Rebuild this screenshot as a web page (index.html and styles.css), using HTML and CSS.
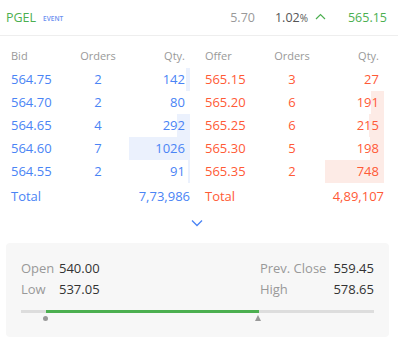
FILE: index.html
```html
<!DOCTYPE html>
<html lang="en">
<head>
    <meta charset="UTF-8">
    <meta name="viewport" content="width=device-width, initial-scale=1.0">
    <title>PGEL Market Depth</title>
    <link rel="stylesheet" href="styles.css">
</head>
<body>
    <div class="header">
        <span class="symbol">PGEL</span>
        <span class="tag">EVENT</span>
        <span class="change">5.70</span>
        <span class="pct">1.02<small>%</small></span>
        <svg class="up" width="11" height="7" viewBox="0 0 11 7"><path d="M1 6 L5.5 1.5 L10 6" fill="none" stroke="#4caf50" stroke-width="1.2"/></svg>
        <span class="ltp">565.15</span>
    </div>

    <div class="depth">
        <div class="side bids">
            <div class="row head"><span>Bid</span><span class="c">Orders</span><span class="r">Qty.</span></div>
            <div class="row"><span>564.75</span><span class="c">2</span><span class="r qty"><i class="bar" style="width: 7%"></i>142</span></div>
            <div class="row"><span>564.70</span><span class="c">2</span><span class="r qty"><i class="bar" style="width: 0%"></i>80</span></div>
            <div class="row"><span>564.65</span><span class="c">4</span><span class="r qty"><i class="bar" style="width: 21%"></i>292</span></div>
            <div class="row"><span>564.60</span><span class="c">7</span><span class="r qty"><i class="bar" style="width: 100%"></i>1026</span></div>
            <div class="row"><span>564.55</span><span class="c">2</span><span class="r qty"><i class="bar" style="width: 3%"></i>91</span></div>
            <div class="total"><span>Total</span><span>7,73,986</span></div>
        </div>
        <div class="side offers">
            <div class="row head"><span>Offer</span><span class="c">Orders</span><span class="r">Qty.</span></div>
            <div class="row"><span>565.15</span><span class="c">3</span><span class="r qty"><i class="bar" style="width: 0%"></i>27</span></div>
            <div class="row"><span>565.20</span><span class="c">6</span><span class="r qty"><i class="bar" style="width: 21%"></i>191</span></div>
            <div class="row"><span>565.25</span><span class="c">6</span><span class="r qty"><i class="bar" style="width: 25%"></i>215</span></div>
            <div class="row"><span>565.30</span><span class="c">5</span><span class="r qty"><i class="bar" style="width: 23%"></i>198</span></div>
            <div class="row"><span>565.35</span><span class="c">2</span><span class="r qty"><i class="bar" style="width: 97%"></i>748</span></div>
            <div class="total"><span>Total</span><span>4,89,107</span></div>
        </div>
    </div>

    <div class="more">
        <svg width="12" height="8" viewBox="0 0 12 8"><path d="M1 1.5 L6 6.5 L11 1.5" fill="none" stroke="#4a84f5" stroke-width="1.3"/></svg>
    </div>

    <div class="panel">
        <div class="stats">
            <div class="pair">
                <span class="label">Open</span><span class="value">540.00</span>
                <span class="label">Low</span><span class="value">537.05</span>
            </div>
            <div class="pair right">
                <span class="label">Prev. Close</span><span class="value">559.45</span>
                <span class="label">High</span><span class="value">578.65</span>
            </div>
        </div>
        <div class="range">
            <div class="fill" style="left: 7.1%; width: 60.3%"></div>
            <span class="dot" style="left: 6.8%"></span>
            <span class="tri" style="left: 67.4%"></span>
        </div>
    </div>
</body>
</html>
```

FILE: styles.css
```css
body {
    font-family: "Open Sans", sans-serif;
    font-size: 13px;
    background-color: #fff;
    margin: 0;
    padding: 0;
    color: #444;
}

.header {
    display: flex;
    align-items: center;
    height: 35px;
    padding: 0 11px 0 6px;
    border-bottom: 1px solid #eee;
}

.symbol {
    color: #4caf50;
    font-size: 12.5px;
}

.tag {
    color: #6b8ff0;
    font-size: 6.5px;
    font-weight: 600;
    margin-left: 7px;
    margin-top: 2px;
}

.change {
    margin-left: auto;
    color: #999;
    font-size: 12.5px;
}

.pct {
    margin-left: 20px;
    color: #555;
    font-size: 12.5px;
}

.pct small {
    font-size: 10px;
}

.up {
    margin-left: 7px;
    margin-top: -2px;
}

.ltp {
    margin-left: 22px;
    color: #4caf50;
    font-size: 12.5px;
}

.depth {
    display: flex;
    gap: 10px;
    padding: 8px 14px 0 6px;
}

.side {
    flex: 1;
}

.row {
    display: grid;
    grid-template-columns: 1fr 1fr 1fr;
    height: 23px;
    align-items: center;
}

.row span {
    padding: 0 5px;
    height: 23px;
    line-height: 23px;
}

.row.head {
    height: 24px;
    font-size: 11px;
    color: #999;
}

.row.head span {
    height: 24px;
    line-height: 24px;
}

.c {
    text-align: center;
}

.r {
    text-align: right;
}

.qty {
    position: relative;
}

.bar {
    position: absolute;
    top: 0;
    right: 0;
    bottom: 0;
    z-index: -1;
}

.bids {
    color: #4a84f5;
}

.bids .bar {
    background-color: #ebf1fd;
}

.offers {
    color: #ff5a36;
}

.offers .bar {
    background-color: #fdebe6;
}

.total {
    display: flex;
    justify-content: space-between;
    height: 26px;
    line-height: 26px;
    padding-left: 5px;
}

.more {
    display: flex;
    justify-content: center;
    padding: 10px 0 12px 0;
    height: 12px;
    margin-left: -4px;
}

.panel {
    margin: 0 9px 0 6px;
    background-color: #f7f7f7;
    border-radius: 4px;
    padding: 15px 15px 0 15px;
    height: 79px;
}

.stats {
    display: flex;
    justify-content: space-between;
}

.pair {
    display: grid;
    grid-template-columns: 38px auto;
    line-height: 21px;
}

.pair.right {
    grid-template-columns: auto auto;
    column-gap: 7px;
}

.pair.right .value {
    text-align: right;
}

.label {
    color: #999;
}

.value {
    color: #333;
}

.range {
    position: relative;
    height: 3px;
    margin-top: 10px;
    background-color: #ddd;
}

.fill {
    position: absolute;
    top: 0;
    height: 3px;
    background-color: #4caf50;
}

.dot {
    position: absolute;
    top: 6px;
    width: 5px;
    height: 5px;
    margin-left: -2.5px;
    border-radius: 50%;
    background-color: #999;
}

.tri {
    position: absolute;
    top: 5px;
    margin-left: -3.5px;
    border-left: 3.5px solid transparent;
    border-right: 3.5px solid transparent;
    border-bottom: 6px solid #999;
}
```
